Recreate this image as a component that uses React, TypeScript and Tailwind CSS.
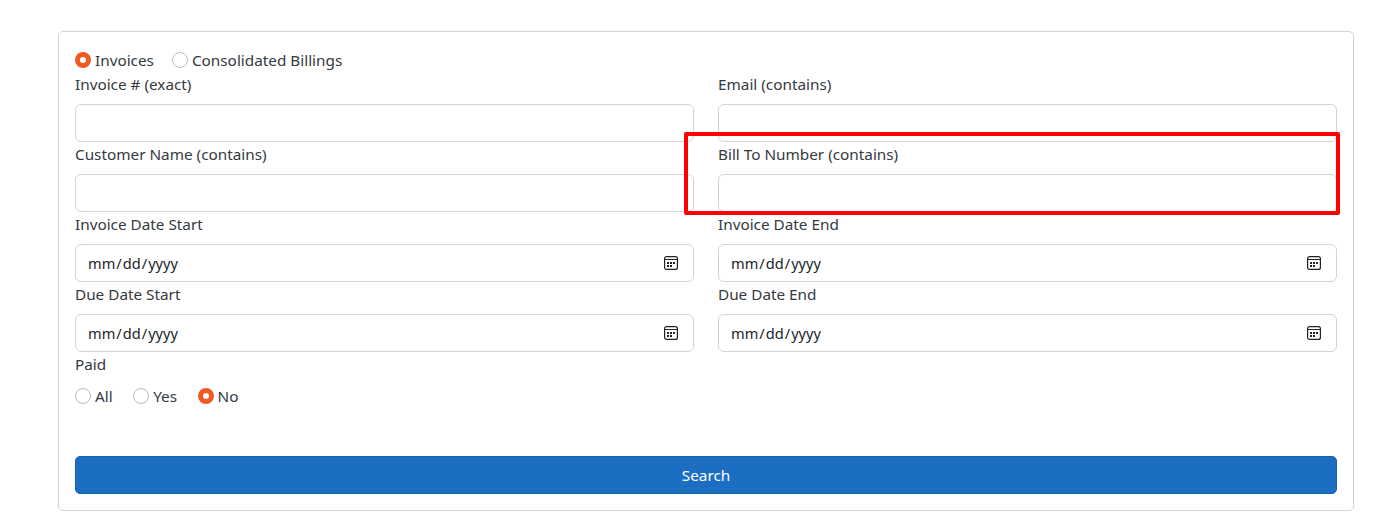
const FIELDS = [
  [
    { label: 'Invoice # (exact)', type: 'text' },
    { label: 'Email (contains)', type: 'text' },
  ],
  [
    { label: 'Customer Name (contains)', type: 'text' },
    { label: 'Bill To Number (contains)', type: 'text' },
  ],
  [
    { label: 'Invoice Date Start', type: 'date' },
    { label: 'Invoice Date End', type: 'date' },
  ],
  [
    { label: 'Due Date Start', type: 'date' },
    { label: 'Due Date End', type: 'date' },
  ],
]

export default function App() {
  return (
    <div className="relative min-h-[531px] bg-white pl-[58px] pt-[31px] font-['Noto_Sans',sans-serif] text-[15.3px] leading-6 text-[#343a40]">
      <form className="w-[1296px] rounded-[5px] border border-[#d0d3d8] p-4">
        <div className="flex h-6 items-center gap-[18px]">
          <Radio label="Invoices" checked />
          <Radio label="Consolidated Billings" />
        </div>

        {FIELDS.map((row) => (
          <div key={row[0].label} className="grid grid-cols-2 gap-6">
            {row.map((field) => (
              <Field key={field.label} label={field.label} type={field.type} />
            ))}
          </div>
        ))}

        <p>Paid</p>
        <div className="mt-2 flex h-6 items-center gap-[20.5px]">
          <Radio label="All" />
          <Radio label="Yes" />
          <Radio label="No" checked />
        </div>

        <button
          type="button"
          className="mt-12 block h-[38px] w-full rounded-[5px] border border-[#1861ac] bg-[#1b6ec2] text-center text-white"
        >
          Search
        </button>
      </form>

      <div className="pointer-events-none absolute left-[684px] top-[132px] h-[83px] w-[656px] rounded-[2px] border-4 border-[#ff0000]" />
    </div>
  )
}

function Field({ label, type }: { label: string; type: string }) {
  return (
    <div>
      <label className="block h-6">{label}</label>
      <div className="relative mt-2">
        <input
          type={type}
          className="block h-[38px] w-full rounded-[6px] border border-[#ced4da] bg-white pl-[11px] pr-3 text-[14.6px] text-[#212529] outline-none [&::-webkit-calendar-picker-indicator]:opacity-0"
        />
        {type === 'date' && <CalendarIcon />}
      </div>
    </div>
  )
}

function CalendarIcon() {
  return (
    <svg
      viewBox="0 0 14 14"
      className="pointer-events-none absolute right-4 top-[12px] size-[14px] text-[#1f2328]"
      fill="currentColor"
    >
      <rect x="0.6" y="0.6" width="12.8" height="12.8" rx="2" fill="none" stroke="currentColor" strokeWidth="1.2" />
      <rect x="1" y="3" width="12" height="1" />
      <rect x="3" y="6" width="2" height="2" />
      <rect x="6" y="6" width="2" height="2" />
      <rect x="9" y="6" width="2" height="2" />
      <rect x="3" y="9" width="2" height="2" />
      <rect x="6" y="9" width="2" height="2" />
    </svg>
  )
}

function Radio({ label, checked = false }: { label: string; checked?: boolean }) {
  return (
    <span className="flex items-center gap-1">
      <span
        className={
          checked
            ? 'size-4 rounded-full border-[5px] border-[#f05a22] bg-white'
            : 'size-4 rounded-full border border-[#bdbdbd] bg-white'
        }
      />
      {label}
    </span>
  )
}
